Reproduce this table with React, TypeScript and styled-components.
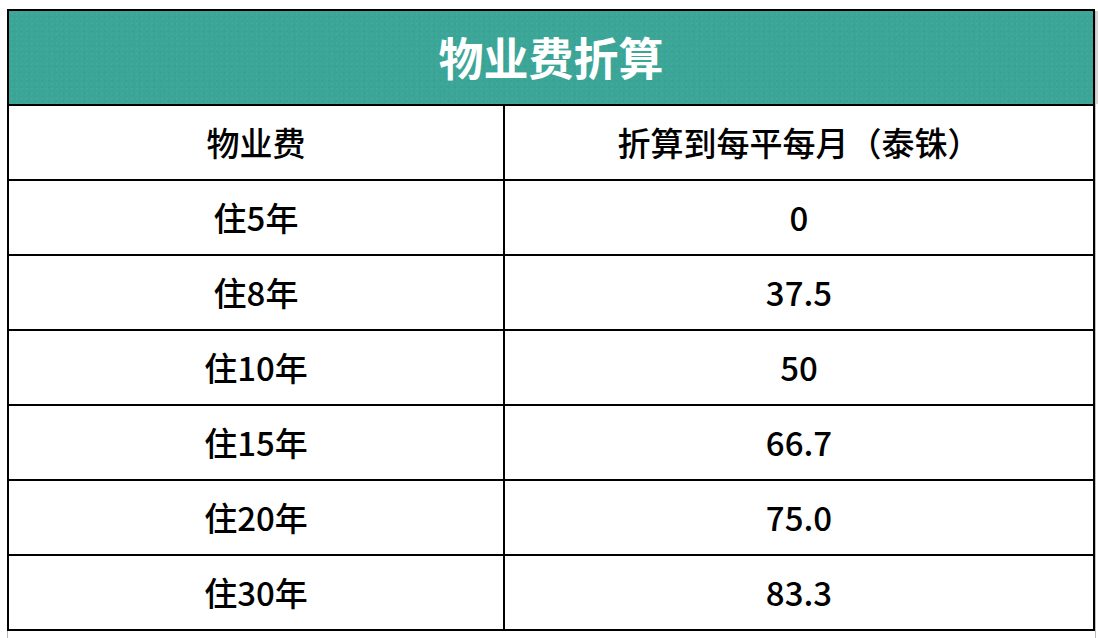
import React from "react";
import styled, { createGlobalStyle } from "styled-components";

const GlobalStyle = createGlobalStyle`
  html, body {
    margin: 0;
    padding: 0;
    background: #ffffff;
  }
  body {
    font-family: "Noto Sans CJK SC", "Noto Sans", sans-serif;
  }
`;

const Page = styled.div`
  width: 1098px;
  height: 638px;
  overflow: hidden;
  padding: 9px 0 0 7px;
  box-sizing: border-box;
  display: flex;
  flex-direction: column;
`;

const Row = styled.div`
  display: flex;
`;

const Sheet = styled.div`
  display: grid;
  grid-template-columns: 494px 588px;
  grid-template-rows: 93px repeat(7, 73px);
  gap: 2px;
  background: #000000;
  border: 2px solid #000000;
  box-sizing: border-box;
`;

const Gutter = styled.div`
  width: 3px;
  margin-top: 2px;
  border-left: 1px solid #c2c2c2;
  background: linear-gradient(#d6d6d6 0 93px, #ffffff 93px);
`;

const Title = styled.div`
  grid-column: 1 / span 2;
  background-color: #3ba597;
  background-image:
    radial-gradient(rgba(255, 255, 255, 0.05) 1px, transparent 1px),
    radial-gradient(rgba(0, 0, 0, 0.04) 1px, transparent 1px);
  background-size: 5px 5px, 7px 7px;
  background-position: 0 0, 2px 3px;
  color: #ffffff;
  font-size: 45px;
  font-weight: 700;
  display: flex;
  align-items: center;
  justify-content: center;
  padding-bottom: 2px;
  box-sizing: border-box;
`;

const Cell = styled.div`
  background: #ffffff;
  color: #000000;
  font-size: 33px;
  font-weight: 500;
  display: flex;
  align-items: center;
  justify-content: center;
  padding-bottom: 2px;
  box-sizing: border-box;
`;

const Tail = styled.div`
  height: 7px;
  width: 1089px;
  border-left: 1px solid #b8b8b8;
  border-right: 1px solid #b8b8b8;
  box-sizing: border-box;
`;

const rows: [string, string][] = [
  ["住5年", "0"],
  ["住8年", "37.5"],
  ["住10年", "50"],
  ["住15年", "66.7"],
  ["住20年", "75.0"],
  ["住30年", "83.3"],
];

export default function App() {
  return (
    <>
      <GlobalStyle />
      <Page>
        <Row>
          <Sheet>
            <Title>物业费折算</Title>
            <Cell>物业费</Cell>
            <Cell>折算到每平每月（泰铢）</Cell>
            {rows.map(([a, b]) => (
              <React.Fragment key={a}>
                <Cell>{a}</Cell>
                <Cell>{b}</Cell>
              </React.Fragment>
            ))}
          </Sheet>
          <Gutter />
        </Row>
        <Tail />
      </Page>
    </>
  );
}
